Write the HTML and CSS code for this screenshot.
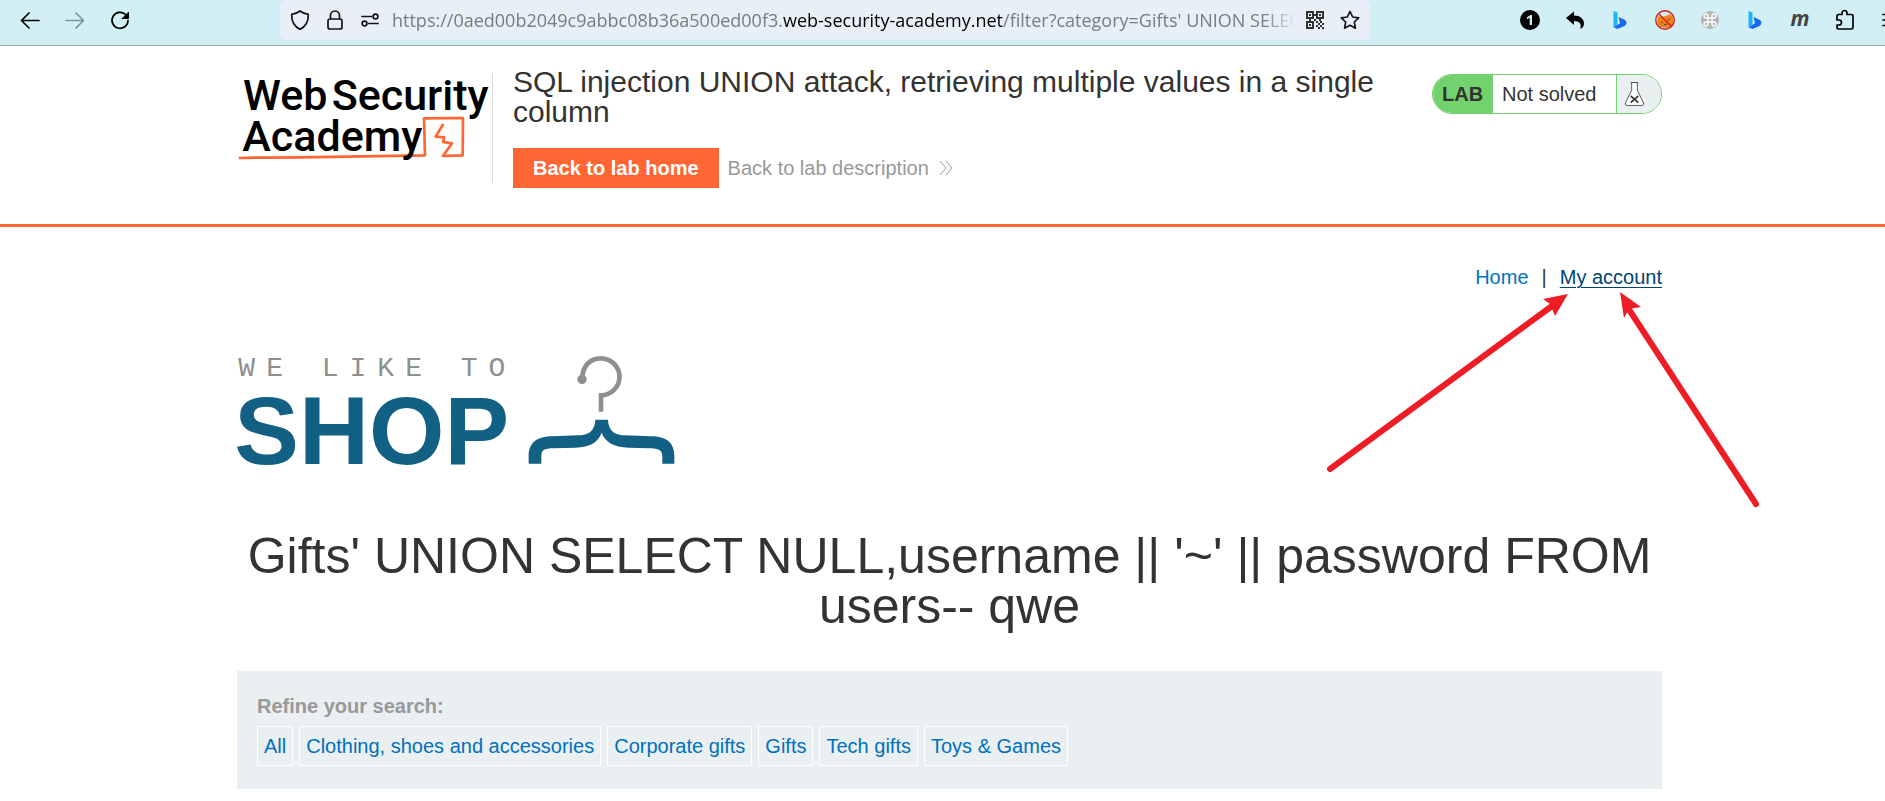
FILE: index.html
```html
<!DOCTYPE html>
<html lang="en">
<head>
<meta charset="utf-8">
<title>SQL injection UNION attack, retrieving multiple values in a single column</title>
<link rel="stylesheet" href="styles.css">
</head>
<body>
<div class="toolbar">
  <div class="tool-group">
    <button class="tool" aria-label="Back"><svg viewBox="0 0 30 30" class="stroke"><path d="M24 15.5H7M14 8l-7.500 7.500L14 23"/></svg></button>
    <button class="tool tool-off" aria-label="Forward"><svg viewBox="0 0 30 30" class="stroke"><path d="M6 15.500h17M16 8l7.500 7.500L16 23"/></svg></button>
    <button class="tool" aria-label="Reload"><svg viewBox="0 0 30 30" class="stroke"><path d="M20.500 9.500A8 8 0 1 0 23 15.500"/><path d="M23.500 7.500v6h-6z" fill="currentColor" stroke-width="1"/></svg></button>
  </div>
  <div class="address">
    <svg viewBox="0 0 20 20" class="stroke icon"><path d="M10 1 C12.500 3 15 4 18.300 4.300 C18.500 12 16 16.500 10 19.300 C4 16.500 1.500 12 1.700 4.300 C5 4 7.500 3 10 1z"/></svg>
    <svg viewBox="0 0 20 20" class="stroke icon"><rect x="3" y="9" width="14" height="10" rx="2"/><path d="M5.500 9V5.500a4.500 4.500 0 0 1 9 0V9"/></svg>
    <svg viewBox="0 0 20 20" class="stroke icon icon-last"><path d="M2 6.500h9.500M8.500 13.500H18"/><circle cx="15.500" cy="6.500" r="2.400"/><circle cx="4.500" cy="13.500" r="2.400"/></svg>
    <div class="url">https://0aed00b2049c9abbc08b36a500ed00f3.<span class="domain">web-security-academy.net</span>/filter?category=Gifts' UNION SELECT</div>
    <svg viewBox="0 0 20 20" class="icon qr"><path fill-rule="evenodd" d="M1 1h8v8H1zM3 3v4h4V3zM11 1h8v8h-8zM13 3v4h4V3zM1 11h8v8H1zM3 13v4h4v-4z"/><path d="M4 4h2v2H4zM14 4h2v2h-2zM4 14h2v2H4zM9 4h2v2H9zM4 9h2v2H4zM9 9h2v2H9zM14 9h2v2h-2zM11 11h2v2h-2zM15 11h2v2h-2zM13 13h2v2h-2zM17 13h2v2h-2zM11 15h2v2h-2zM15 15h2v2h-2zM13 17h2v2h-2zM17 17h2v2h-2z"/></svg>
    <svg viewBox="0 0 20 20" class="stroke icon"><path d="M10 1.500l2.700 5.500 6 .8-4.400 4.200 1.100 6.200L10 15.300l-5.400 2.900 1.100-6.200L1.300 7.800l6-.8z"/></svg>
  </div>
  <div class="tool-group">
    <button class="tool" aria-label="One tab"><svg viewBox="0 0 30 30"><circle cx="15" cy="15" r="10"/><path d="M12 12.300l3.500-2.300h1.500v10h-2.300v-7.200l-2.700 1.500z" fill="#d1eff4"/></svg></button>
    <button class="tool" aria-label="Undo"><svg viewBox="0 0 30 30"><path d="M6 13l8-6.500v4c6 0 10 3.500 10 8 0 2.500-1 4.500-4 5.500 1.500-2.500 1.500-8-6-8v4z"/></svg></button>
    <button class="tool" aria-label="Bing"><svg viewBox="0 0 30 30"><path d="M8.500 6l4 1.500v12l-4 3z" fill="#19b5f5"/><path d="M13.500 12l6 2.800q2 1 2 3t-2 3.200L12.500 24l-4-1.800 6.500-4z" fill="#1769f0"/></svg></button>
    <button class="tool" aria-label="Blocker"><svg viewBox="0 0 30 30"><path d="M8 11l4 1 4-1 4-2 3 3v8l-5 3-8-1-3-4z" fill="#ee8419"/><path d="M11 17l2 1M18 15l2-1M14 20l3-1" stroke="#633" stroke-width="1"/><circle cx="15" cy="15" r="9.300" fill="none" stroke="#d51f25" stroke-width="1.400"/><path d="M8.500 8.500l13 13" stroke="#d51f25" stroke-width="1.400"/></svg></button>
    <button class="tool" aria-label="Shortcuts"><svg viewBox="0 0 30 30"><circle cx="15" cy="15" r="9" fill="#b5b5b5"/><path d="M13 17v-6a2 2 0 1 0-2 2h8a2 2 0 1 0-2-2v8a2 2 0 1 0 2-2h-8a2 2 0 1 0 2 2z" fill="none" stroke="#fff" stroke-width="1.300"/></svg></button>
    <button class="tool" aria-label="Bing chat"><svg viewBox="0 0 30 30"><path d="M8.500 6l4 1.500v12l-4 3z" fill="#19b5f5"/><path d="M13.500 12l6 2.800q2 1 2 3t-2 3.200L12.500 24l-4-1.800 6.500-4z" fill="#1769f0"/></svg></button>
    <button class="tool tool-m" aria-label="Markdown">m</button>
    <button class="tool" aria-label="Extensions"><svg viewBox="0 0 30 30" class="stroke"><path d="M7 12.500V11q0-1.500 1.500-1.500H12V8a2.500 2.500 0 0 1 5 0v1.500h4.500Q23 9.500 23 11v11.500q0 1.500-1.500 1.500h-13Q7 24 7 22.500V20h2a2.500 2.500 0 0 0 0-5H7z"/></svg></button>
    <button class="tool" aria-label="Menu"><svg viewBox="0 0 30 30" class="stroke"><path d="M8 9.500h14M8 15h14M8 20.500h14"/></svg></button>
  </div>
</div>

<header class="lab-header">
  <div class="wrap header-row">
    <a class="brand" href="#" aria-label="Web Security Academy">
      <svg viewBox="50 66 750 270" class="brand-logo">
        <path d="M55 324Q130 322 240 322L614 316L611 205L728 204L727 316L668 318L695 280L668 276L672 262L646 260L669 222" fill="none" stroke="#ff6633" stroke-width="8" stroke-linejoin="round"/>
        <text x="68" y="180" class="brand-text">Web</text>
        <text x="334" y="180" class="brand-text">Security</text>
        <text x="66" y="302" class="brand-text">Academy</text>
      </svg>
    </a>
    <div class="lab-title">
      <h2>SQL injection UNION attack, retrieving multiple values in a single column</h2>
      <div class="lab-links">
        <a class="lab-button" href="#">Back to lab home</a>
        <a class="lab-back" href="#">Back to lab description
          <svg viewBox="0 0 16 16" class="chevrons"><path d="M2 1l6 7-6 7M8 1l6 7-6 7"/></svg>
        </a>
      </div>
    </div>
    <div class="status">
      <span class="status-tag">LAB</span>
      <span class="status-text">Not solved</span>
      <span class="status-icon"><svg viewBox="0 0 22 26" class="flask"><path d="M7 1h8M8 1v8L1.500 22.500q-.5 2.500 1.500 2.500h16q2 0 1.500-2.500L14 9V1z" fill="#fff" stroke="#555"/><path d="M7 15l8 7M15 15l-8 7" stroke="#333" stroke-width="1.800"/></svg></span>
    </div>
  </div>
</header>

<main class="wrap">
  <nav class="account">
    <a href="#">Home</a><span>|</span><a class="current" href="#">My account</a>
    <svg viewBox="1320 285 450 230" class="arrows">
      <path d="M1330 469L1552 306M1756 504L1628 308" stroke="#ee1c24" stroke-width="6" stroke-linecap="round"/>
      <path d="M1568 294L1543 299L1550 304L1555 316zM1620 292L1641 307L1629 309L1624 318z" fill="#ee1c24"/>
    </svg>
  </nav>
  <svg viewBox="50 40 1320 345" class="shop-logo" role="img" aria-label="We like to shop">
    <text x="54" y="108" class="shop-small">WE LIKE TO</text>
    <text x="42" y="374" class="shop-big">SHOP</text>
    <path d="M1086 118C1086 80 1108 56 1142 56A55 55 0 0 1 1142 167V216" fill="none" stroke="#8e8f91" stroke-width="14"/>
    <circle cx="1085" cy="119" r="14" fill="#8e8f91"/>
    <path d="M1125 240H1163C1164 275 1185 287 1215 287L1290 290C1340 290 1362 310 1362 350V372H1326V350C1326 332 1316 326 1285 326L1225 324C1180 322 1155 308 1144 279C1133 308 1110 322 1065 324L1000 326C970 326 963 332 963 350V372H925V350C925 310 948 290 998 290L1073 287C1103 287 1124 275 1125 240z" fill="#126084"/>
  </svg>
  <h1>Gifts' UNION SELECT NULL,username || '~' || password FROM users-- qwe</h1>
  <section class="filters">
    <div class="filters-title">Refine your search:</div>
    <div class="filters-list">
      <a href="#">All</a>
      <a href="#">Clothing, shoes and accessories</a>
      <a href="#">Corporate gifts</a>
      <a href="#">Gifts</a>
      <a href="#">Tech gifts</a>
      <a href="#">Toys &amp; Games</a>
    </div>
  </section>
</main>
</body>
</html>
```
FILE: styles.css
```css
* { box-sizing: border-box; }
body {
  margin: 0;
  overflow-x: hidden;
  background: #fff;
  color: #333332;
  font: 20px/24px "Liberation Sans", Arial, sans-serif;
}
a { color: #0071bc; text-decoration: none; }
h1, h2 { margin: 0; font-weight: 400; }

.toolbar {
  display: flex;
  align-items: center;
  height: 46px;
  padding-bottom: 5px;
  margin-right: -20px;
  padding-left: 15px;
  background: #d1eff4;
  border-bottom: 1px solid #94a9ae;
}
.tool-group { display: flex; gap: 15px; }
.tool {
  display: block;
  width: 30px;
  height: 30px;
  padding: 0;
  border: 0;
  background: none;
  color: #000;
}
.tool svg { display: block; width: 30px; height: 30px; }
.tool-off { color: #819497; }
.tool-m { font: italic bold 21px/22px "Open Sans", sans-serif; color: #444; padding-bottom: 4px; }
.stroke { fill: none; stroke: currentColor; stroke-width: 1.7; stroke-linecap: round; stroke-linejoin: round; }

.address {
  display: flex;
  flex: 1;
  align-items: center;
  min-width: 0;
  height: 40px;
  margin: 0 145px;
  padding: 0 10px;
  border-radius: 6px;
  background: #e8eff6;
  color: #15141a;
}
.icon { flex: none; width: 20px; height: 20px; margin-right: 15px; }
.icon-last { margin-right: 12px; }
.icon:last-child { margin-right: 0; }
.qr { fill: #333; margin-left: 9px; }
.url {
  flex: 1;
  overflow: hidden;
  white-space: nowrap;
  color: #708085;
  font: 18px/24px "Open Sans", "Noto Sans", sans-serif;
  -webkit-mask-image: linear-gradient(to left, transparent, #000 32px);
  mask-image: linear-gradient(to left, transparent, #000 32px);
}
.domain { color: #000; }

.wrap { padding: 0 223px 0 237px; }
.lab-header { padding: 16px 0 36px; border-bottom: 3px solid #ff6633; }
.header-row { display: flex; align-items: flex-start; }
.brand {
  flex: none;
  width: 256px;
  height: 108px;
  margin-top: 12px;
  border-right: 1px solid #ddd;
}
.brand-logo { display: block; width: 250px; height: 90px; margin-top: -2px; overflow: visible; }
.brand-text { font: 500 129px Roboto, sans-serif; fill: #000; }
.lab-title { flex: 1; padding: 5px 48px 0 20px; }
.lab-title h2 { font-size: 30px; line-height: 30px; }
.lab-links { display: flex; align-items: center; gap: 9px; margin-top: 21px; }
.lab-button {
  padding: 8px 20px;
  background: #ff6633;
  color: #fff;
  font-weight: 700;
}
.lab-back { display: flex; align-items: center; gap: 9px; color: #999; }
.chevrons { width: 16px; height: 16px; fill: none; stroke: #999; stroke-width: 1; }
.status {
  display: flex;
  flex: none;
  width: 230px;
  height: 40px;
  margin-top: 12px;
  overflow: hidden;
  border: 1px solid #72d26e;
  border-radius: 20px;
  line-height: 38px;
}
.status-tag { width: 60px; padding-left: 9px; background: #72d26e; font-weight: 700; }
.status-text { flex: 1; padding-left: 9px; }
.status-icon { width: 45px; padding: 6px 7px; border-left: 1px solid #72d26e; background: #eaeff2; }
.flask { display: block; width: 21px; height: 26px; fill: none; }

.account {
  position: relative;
  display: flex;
  justify-content: flex-end;
  gap: 13px;
  padding-top: 38px;
}
.current { color: #00456e; text-decoration: underline; text-decoration-thickness: 1px; text-underline-offset: 3px; }
.arrows { position: absolute; top: 58px; right: -108px; width: 450px; height: 230px; fill: none; }
.shop-logo { display: block; width: 440px; height: 115px; margin-top: 64px; overflow: visible; }
.shop-small { font: 84px "Liberation Mono", monospace; letter-spacing: 33px; fill: #8e8f91; }
.shop-big { font: bold 291px "Liberation Sans", Arial, sans-serif; fill: #126084; }
h1 { margin-top: 63px; font-size: 50px; line-height: 50px; text-align: center; }
.filters { margin-top: 40px; padding: 23px 20px; background: #eaeff2; }
.filters-title { color: #999; font-weight: 700; }
.filters-list { display: flex; flex-wrap: wrap; gap: 6px; margin-top: 8px; }
.filters-list a { padding: 7px 6px; border: 1px solid #fff; }
```
